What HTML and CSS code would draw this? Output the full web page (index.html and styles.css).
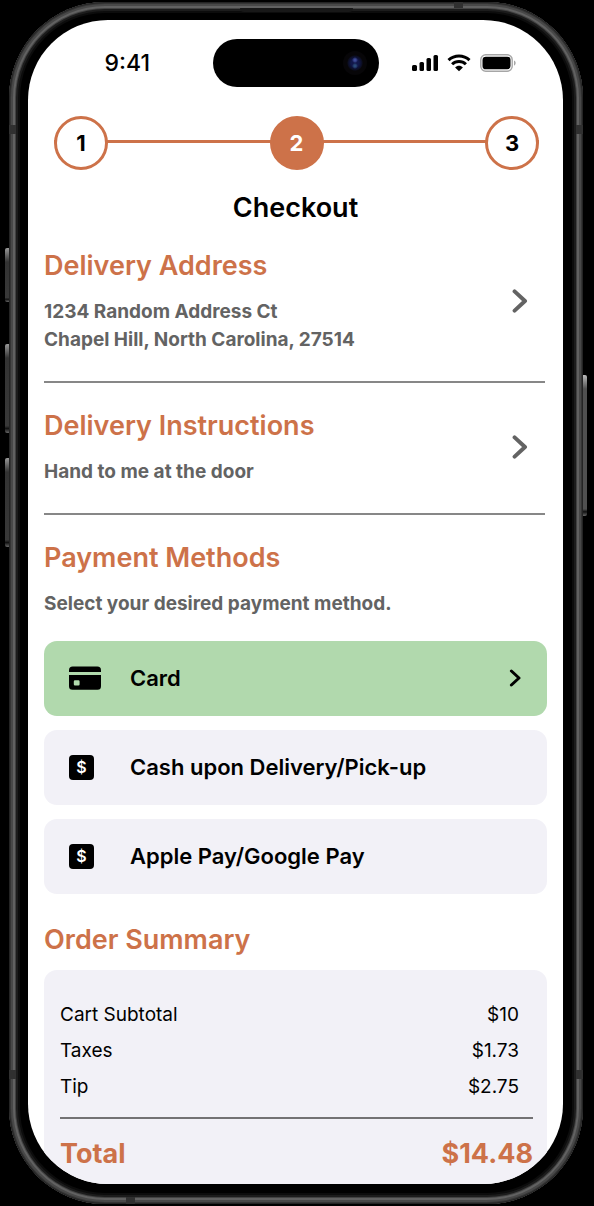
FILE: index.html
```html
<!DOCTYPE html>
<html lang="en">
<head>
<meta charset="utf-8">
<meta name="viewport" content="width=device-width, initial-scale=1">
<title>Checkout</title>
<link rel="stylesheet" href="styles.css">
</head>
<body>
<div class="phone">
  <span class="key key-action"></span>
  <span class="key key-up"></span>
  <span class="key key-down"></span>
  <span class="key key-power"></span>
  <span class="slot"></span>
  <span class="band band-left-top"></span>
  <span class="band band-right-top"></span>
  <span class="band band-left-bottom"></span>
  <span class="band band-right-bottom"></span>
  <span class="band band-top"></span>
  <span class="band band-bottom"></span>

  <div class="screen">
    <header class="status">
      <time class="clock">9:41</time>
      <div class="island"><span class="camera"></span></div>
      <div class="indicators">
        <svg width="27" height="18" viewBox="0 0 27 18" aria-label="Signal">
          <rect x="0" y="11" width="5" height="6" rx="1.5"/>
          <rect x="7.5" y="8" width="4.5" height="9" rx="1.5"/>
          <rect x="14.5" y="4" width="4.5" height="13" rx="1.5"/>
          <rect x="21.5" y="1" width="4.5" height="16" rx="1.5"/>
        </svg>
        <svg width="24" height="18" viewBox="0 0 24 18" aria-label="Wi-Fi">
          <g fill="none" stroke="#000" stroke-width="3">
            <path d="M1.5 6.2C7.4 .7 16.6 .7 22.5 6.2"/>
            <path d="M5.1 10.3C8.9 6.6 15.1 6.6 18.9 10.3"/>
          </g>
          <path d="M8.1 13.4C10.3 11.3 13.7 11.3 15.9 13.4L12 17.3Z"/>
        </svg>
        <svg width="36" height="18" viewBox="0 0 36 18" aria-label="Battery">
          <rect x=".8" y=".8" width="31.4" height="16.4" rx="5" fill="none" stroke="#a6a6a6" stroke-width="1.4"/>
          <rect x="2.5" y="2.7" width="28" height="12.6" rx="3.4"/>
          <path d="M34 6.4C36.2 7.2 36.2 10.8 34 11.6Z" fill="#a6a6a6"/>
        </svg>
      </div>
    </header>

    <main class="content">
      <ol class="steps">
        <li class="step">1</li>
        <li class="step step-current" aria-current="step">2</li>
        <li class="step">3</li>
      </ol>
      <h1 class="title">Checkout</h1>

      <section class="section">
        <div>
          <h2 class="heading">Delivery Address</h2>
          <p class="detail">1234 Random Address Ct<br>Chapel Hill, North Carolina, 27514</p>
        </div>
        <button class="more" type="button" aria-label="Edit delivery address">
          <svg width="16" height="24" viewBox="0 0 16 24"><path d="M2.6 2.4L13 12L2.6 21.6"/></svg>
        </button>
      </section>

      <section class="section">
        <div>
          <h2 class="heading">Delivery Instructions</h2>
          <p class="detail">Hand to me at the door</p>
        </div>
        <button class="more" type="button" aria-label="Edit delivery instructions">
          <svg width="16" height="24" viewBox="0 0 16 24"><path d="M2.6 2.4L13 12L2.6 21.6"/></svg>
        </button>
      </section>

      <section class="payment">
        <h2 class="heading">Payment Methods</h2>
        <p class="detail">Select your desired payment method.</p>
        <div class="methods">
          <button class="method method-selected" type="button">
            <svg width="32" height="24" viewBox="0 0 32 24">
              <path d="M0 6V4.2A3.7 3.7 0 0 1 3.7.5H28.3A3.7 3.7 0 0 1 32 4.2V6Z"/>
              <path fill-rule="evenodd" d="M0 9H32V20.2A3.5 3.5 0 0 1 28.5 23.7H3.5A3.5 3.5 0 0 1 0 20.2ZM6 14.2A1.2 1.2 0 0 0 4.8 15.4V18.3A1.2 1.2 0 0 0 6 19.5H9.4A1.2 1.2 0 0 0 10.6 18.3V15.4A1.2 1.2 0 0 0 9.4 14.2Z"/>
            </svg>
            <span class="method-name">Card</span>
            <svg class="go" width="12" height="18" viewBox="0 0 12 18"><path d="M2.4 2L10 9L2.4 16"/></svg>
          </button>
          <button class="method" type="button">
            <span class="cash">$</span>
            <span class="method-name">Cash upon Delivery/Pick-up</span>
          </button>
          <button class="method" type="button">
            <span class="cash">$</span>
            <span class="method-name">Apple Pay/Google Pay</span>
          </button>
        </div>
      </section>

      <section class="summary">
        <h2 class="heading">Order Summary</h2>
        <div class="receipt">
          <dl class="lines">
            <div class="line"><dt>Cart Subtotal</dt><dd>$10</dd></div>
            <div class="line"><dt>Taxes</dt><dd>$1.73</dd></div>
            <div class="line"><dt>Tip</dt><dd>$2.75</dd></div>
            <div class="total"><dt>Total</dt><dd>$14.48</dd></div>
          </dl>
        </div>
      </section>
    </main>
  </div>
</div>
</body>
</html>
```
FILE: styles.css
```css
* {
  box-sizing: border-box;
}

body,
h1,
h2,
p,
ol,
dl,
dd {
  margin: 0;
}

body {
  min-height: 100vh;
  display: flex;
  padding: 2px 11px 2px 9px;
  background: #000;
  color: #000;
  font-family: Inter, "Liberation Sans", sans-serif;
}

button {
  border: 0;
  background: none;
  color: inherit;
  font: inherit;
  cursor: pointer;
}

/* Device frame */
.phone {
  position: relative;
  flex: 1;
  display: flex;
  padding: 18px 20px 20px 19px;
  border-radius: 96px;
  background: #000;
  box-shadow:
    inset 0 0 0 1px #242424,
    inset 0 0 0 2px #353535,
    inset 0 0 0 4px #484848,
    inset 0 0 0 6px #616161,
    inset 0 0 0 7px #424242,
    inset 0 0 0 9px #1c1c1c,
    inset 0 0 0 11px #0c0c0c;
}

.key {
  position: absolute;
  left: -4px;
  width: 4px;
  border-radius: 2px 0 0 2px;
  background: linear-gradient(#999, #333 14px, #383838 92%, #111 95%, #666);
}

.key-action {
  top: 246px;
  height: 54px;
}

.key-up {
  top: 342px;
  height: 89px;
}

.key-down {
  top: 456px;
  height: 89px;
}

.key-power {
  top: 373px;
  right: -4px;
  left: auto;
  height: 141px;
  border-radius: 0 2px 2px 0;
  background: linear-gradient(#bbb, #505050 14px, #505050 95%, #111 97%, #666);
}

.slot {
  position: absolute;
  top: 6px;
  left: 50%;
  width: 113px;
  height: 4px;
  margin-left: -56px;
  border-radius: 0 0 4px 4px;
  background: #181818;
}

.band {
  position: absolute;
  width: 7px;
  height: 9px;
  background: #303030;
}

.band-left-top {
  top: 123px;
  left: 0;
}

.band-right-top {
  top: 123px;
  right: 0;
}

.band-left-bottom {
  bottom: 125px;
  left: 0;
}

.band-right-bottom {
  bottom: 125px;
  right: 0;
}

.band-top {
  top: 0;
  right: 120px;
  width: 9px;
  height: 6px;
}

.band-bottom {
  bottom: 0;
  left: 117px;
  width: 9px;
  height: 7px;
}

.screen {
  flex: 1;
  display: flex;
  flex-direction: column;
  overflow: hidden;
  border-radius: 80px;
  background: #fff;
}

/* Status bar */
.status {
  display: grid;
  grid-template-columns: 1fr 166px 1fr;
  align-items: center;
  padding-top: 19px;
}

.clock {
  padding-left: 14px;
  font-size: 23px;
  font-weight: 500;
  text-align: center;
}

.island {
  display: flex;
  align-items: center;
  justify-content: flex-end;
  height: 48px;
  padding-right: 12px;
  border-radius: 24px;
  background: #000;
}

.camera {
  width: 24px;
  height: 24px;
  border-radius: 50%;
  background:
    radial-gradient(circle at 50% 38%, #3d4a96 0 1px, transparent 3px),
    radial-gradient(circle at 50% 62%, #2a4a78 0 1px, transparent 3px),
    radial-gradient(circle, #11174a 0 4px, #0b0d20 7px, #070608 8px);
}

.indicators {
  display: flex;
  align-items: center;
  justify-content: center;
  gap: 8px;
  padding-right: 13px;
}

.indicators svg:last-child {
  margin-left: 1px;
}

/* Page content */
.content {
  flex: 1;
  display: flex;
  flex-direction: column;
  padding: 29px 16px 0;
}

.steps {
  display: flex;
  justify-content: space-between;
  margin: 0 8px 0 10px;
  padding: 0;
  background: linear-gradient(#cd7249, #cd7249) 0 24px / 100% 3px no-repeat;
  list-style: none;
}

.step {
  display: flex;
  align-items: center;
  justify-content: center;
  width: 54px;
  height: 54px;
  border: 3px solid #cd7249;
  border-radius: 50%;
  background: #fff;
  font-size: 22px;
  font-weight: 700;
}

.step-current {
  background: #cd7249;
  color: #fff;
}

.title,
.heading {
  font-size: 27px;
  font-weight: 600;
  line-height: 36px;
}

.title {
  margin: 20px 0 22px;
  text-align: center;
}

.heading {
  color: #cd7249;
}

.detail {
  margin-top: 14px;
  color: #636363;
  font-size: 19px;
  font-weight: 700;
  line-height: 28px;
}

.section {
  display: flex;
  align-items: center;
  justify-content: space-between;
  margin: 0 2px 25px 0;
  padding-bottom: 27px;
  border-bottom: 2px solid #878787;
}

.more {
  display: flex;
  padding: 10px 17px;
}

.more svg,
.go {
  fill: none;
  stroke: #636363;
  stroke-width: 4;
  stroke-linecap: round;
  stroke-linejoin: round;
}

.methods {
  display: flex;
  flex-direction: column;
  gap: 14px;
  margin-top: 23px;
}

.method {
  display: grid;
  grid-template-columns: 61px 1fr auto;
  align-items: center;
  height: 75px;
  padding: 0 26px 1px 25px;
  border-radius: 13px;
  background: #f2f1f7;
  font-size: 22px;
  font-weight: 600;
  text-align: left;
}

.method-selected {
  background: #b1d9ad;
}

.go {
  stroke: #000;
  stroke-width: 3;
}

.cash {
  display: flex;
  align-items: center;
  justify-content: center;
  width: 25px;
  height: 25px;
  border-radius: 4px;
  background: #000;
  color: #fff;
  font-size: 16px;
  font-weight: 600;
}

/* Order summary */
.summary {
  flex: 1;
  display: flex;
  flex-direction: column;
  margin-top: 28px;
}

.receipt {
  flex: 1;
  margin-top: 12px;
  padding: 27px 14px 11px 16px;
  border-radius: 13px 13px 0 0;
  background: #f2f1f7;
}

.line,
.total {
  display: flex;
  justify-content: space-between;
  line-height: 36px;
}

.line {
  padding-right: 14px;
  font-size: 19px;
}

.total {
  margin-top: 12px;
  padding-top: 17px;
  border-top: 2px solid #737274;
  color: #cd7249;
  font-size: 27px;
  font-weight: 700;
}
```
